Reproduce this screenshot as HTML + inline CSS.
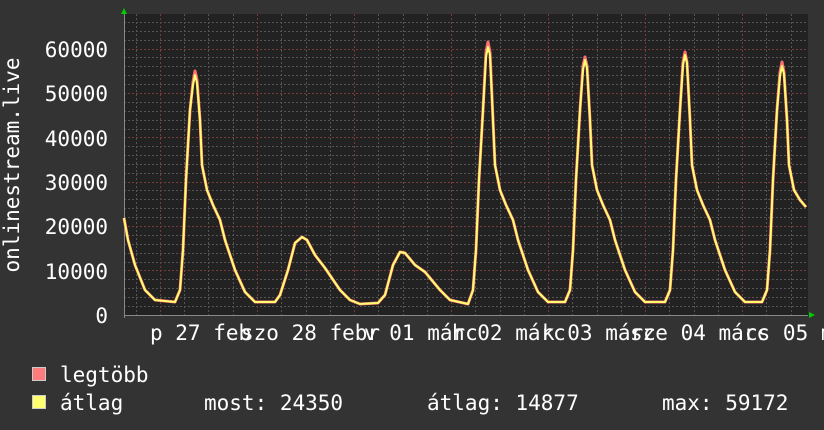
<!DOCTYPE html>
<html><head><meta charset="utf-8"><style>
html,body{margin:0;padding:0;background:#333}
svg{display:block}
text{font-family:"DejaVu Sans Mono","Liberation Mono",monospace;fill:#fff;font-size:21px}
</style></head><body>
<svg width="824" height="430" viewBox="0 0 824 430">
<rect width="824" height="430" fill="#333"/>
<rect x="124" y="14" width="684" height="301" fill="#222"/>
<g stroke="#555" stroke-width="1" stroke-dasharray="2,2">
<path d="M124 306.5H808M124 297.5H808M124 288.5H808M124 279.5H808M124 262.5H808M124 253.5H808M124 244.5H808M124 235.5H808M124 217.5H808M124 208.5H808M124 199.5H808M124 190.5H808M124 173.5H808M124 164.5H808M124 155.5H808M124 146.5H808M124 129.5H808M124 120.5H808M124 111.5H808M124 102.5H808M124 84.5H808M124 75.5H808M124 66.5H808M124 57.5H808M124 40.5H808M124 31.5H808M124 22.5H808"/>
<path d="M136.5 14V315M184.5 14V315M208.5 14V315M233.5 14V315M281.5 14V315M306.5 14V315M330.5 14V315M378.5 14V315M403.5 14V315M427.5 14V315M475.5 14V315M500.5 14V315M524.5 14V315M572.5 14V315M597.5 14V315M621.5 14V315M669.5 14V315M694.5 14V315M718.5 14V315M766.5 14V315M791.5 14V315"/>
</g>
<g stroke="#7a3a3a" stroke-width="1" stroke-dasharray="2,2">
<path d="M124 270.5H808M124 226.5H808M124 182.5H808M124 137.5H808M124 93.5H808M124 49.5H808"/>
<path d="M160.5 14V315M257.5 14V315M354.5 14V315M451.5 14V315M548.5 14V315M645.5 14V315M742.5 14V315"/>
</g>
<path d="M124 315.5H808" stroke="#888"/>
<path d="M124.5 14V318" stroke="#888"/>
<polygon points="121,14 127,14 124,8" fill="#0c0"/>
<polygon points="809,312 809,318 815,315" fill="#0c0"/>
<g fill="none" stroke-linejoin="round">
<path d="M124,218 128,240 135,265 145,290 155,300 175,302 180,290 183,250 186,180 190,110 193,82 195,71 197,80 200,120 202,165 207,190 213,205 220,220 225,240 235,270 245,292 255,302 275,302 280,295 288,270 295,243 302,237 307,240 315,255 325,268 340,290 350,300 360,304 378,303 385,295 393,265 400,252 405,253 415,265 425,272 440,290 450,300 468,304 473,290 476,250 479,180 483,110 486,52 488,42 490,52 493,120 495,165 500,190 506,205 513,220 518,240 528,270 538,292 548,302 565,302 570,290 573,250 576,180 580,110 583,66 585,57 587,66 590,120 592,165 597,190 603,205 610,220 615,240 625,270 635,292 645,302 665,302 670,290 673,250 676,180 680,110 683,62 685,52 687,62 690,120 692,165 697,190 703,205 710,220 715,240 725,270 735,292 745,302 762,302 767,290 770,250 773,180 777,110 780,72 782,62 784,72 787,120 789,165 794,190 800,200 806,207" stroke="#ff7070" stroke-width="3"/>
<path d="M124,218 128,240 135,265 145,290 155,300 175,302 180,290 183,250 186,180 190,110 193,85 195,75 197,83 200,120 202,165 207,190 213,205 220,220 225,240 235,270 245,292 255,302 275,302 280,295 288,270 295,243 302,237 307,240 315,255 325,268 340,290 350,300 360,304 378,303 385,295 393,265 400,252 405,253 415,265 425,272 440,290 450,300 468,304 473,290 476,250 479,180 483,110 486,57 488,47 490,55 493,120 495,165 500,190 506,205 513,220 518,240 528,270 538,292 548,302 565,302 570,290 573,250 576,180 580,110 583,70 585,60 587,68 590,120 592,165 597,190 603,205 610,220 615,240 625,270 635,292 645,302 665,302 670,290 673,250 676,180 680,110 683,65 685,55 687,63 690,120 692,165 697,190 703,205 710,220 715,240 725,270 735,292 745,302 762,302 767,290 770,250 773,180 777,110 780,76 782,66 784,74 787,120 789,165 794,190 800,200 806,207" stroke="#ffff70" stroke-width="2"/>
</g>
<g text-anchor="end">
<text x="108" y="57">60000</text>
<text x="108" y="101">50000</text>
<text x="108" y="146">40000</text>
<text x="108" y="190">30000</text>
<text x="108" y="234">20000</text>
<text x="108" y="279">10000</text>
<text x="108" y="323">0</text>
</g>
<text transform="translate(19,165) rotate(-90)" text-anchor="middle">onlinestream.live</text>
<text x="150" y="340">p 27 feb</text>
<text x="241" y="340">szo 28 febr</text>
<text x="364" y="340">v 01 márc</text>
<text x="452" y="340">h 02 márc</text>
<text x="542" y="340">k 03 márc</text>
<text x="630" y="340">sze 04 márc</text>
<text x="745" y="340">cs 05 m</text>
<rect x="32.5" y="367.5" width="13" height="13" fill="#ff7c7c" stroke="#ccc"/>
<rect x="32.5" y="395.5" width="13" height="13" fill="#ffff70" stroke="#ccc"/>
<text x="60" y="382">legtöbb</text>
<text x="60" y="410">átlag</text>
<text x="204" y="410">most: 24350</text>
<text x="427" y="410">átlag: 14877</text>
<text x="662" y="410">max: 59172</text>
</svg>
</body></html>
